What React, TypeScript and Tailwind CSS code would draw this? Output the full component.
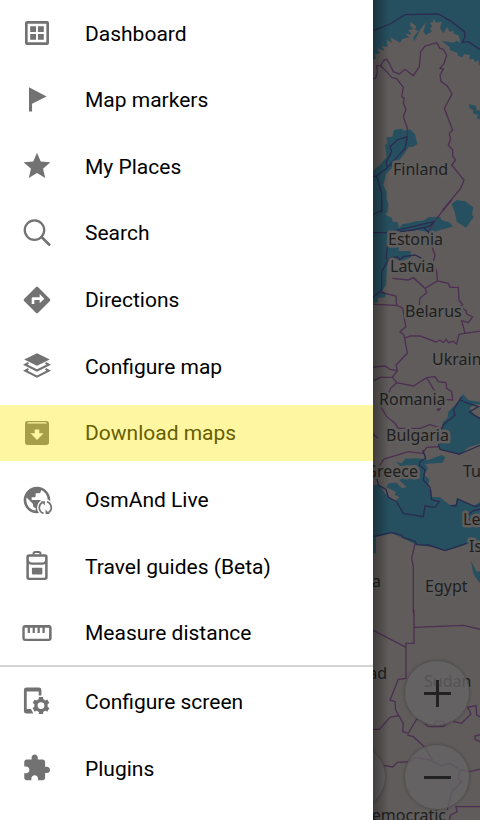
import React from "react";

type Item = { label: string; icon: React.ReactNode; active?: boolean };

const primary: Item[] = [
  {
    label: "Dashboard",
    icon: (
      <path
        fillRule="evenodd"
        d="M4.5 3h15A1.5 1.5 0 0 1 21 4.5v15a1.5 1.5 0 0 1-1.5 1.5h-15A1.5 1.5 0 0 1 3 19.5v-15A1.5 1.5 0 0 1 4.5 3zM5 5v14h14V5zM6.9 6.9h4.4v4.4H6.9zM12.7 6.9h4.4v4.4h-4.4zM6.9 12.7h4.4v4.4H6.9zM12.7 12.7h4.4v4.4h-4.4z"
      />
    ),
  },
  { label: "Map markers", icon: <path d="M6 2.5 19.2 9.3 8.3 14.8v5.9H6z" /> },
  {
    label: "My Places",
    icon: <path d="M12 17.27 18.18 21l-1.64-7.03L22 9.24l-7.19-.61L12 2 9.19 8.63 2 9.24l5.46 4.73L5.82 21z" />,
  },
  {
    label: "Search",
    icon: (
      <g fill="none" stroke="currentColor" strokeLinecap="round">
        <circle cx="10.1" cy="9.8" r="7.3" strokeWidth="1.7" />
        <path d="m15.4 15 5.9 5.8" strokeWidth="1.9" />
      </g>
    ),
  },
  {
    label: "Directions",
    icon: (
      <path d="M21.71 11.29l-9-9c-.39-.39-1.02-.39-1.41 0l-9 9c-.39.39-.39 1.02 0 1.41l9 9c.39.39 1.02.39 1.41 0l9-9c.39-.38.39-1.01 0-1.41zM14 14.5V12h-4v3H8v-4c0-.55.45-1 1-1h5V7.5l3.5 3.5-3.5 3.5z" />
    ),
  },
  {
    label: "Configure map",
    icon: (
      <g>
        <path d="m12 2.4 9.6 4.7-9.6 4.8-9.6-4.8z" />
        <path
          d="M5.6 9.6 3.2 11l8.8 4.4 8.8-4.4-2.4-1.4M5.6 14.2l-2.4 1.4L12 20l8.8-4.4-2.4-1.4"
          fill="none"
          stroke="currentColor"
          strokeWidth="1.6"
        />
      </g>
    ),
  },
  {
    label: "Download maps",
    active: true,
    icon: (
      <path
        fillRule="evenodd"
        d="M5 3h14a2 2 0 0 1 2 2v14a2 2 0 0 1-2 2H5a2 2 0 0 1-2-2V5a2 2 0 0 1 2-2zM5.2 4 4.600 4.800h14.800l-.600-.800zM10.300 9.300h3.400v2.900h3.200L12 17.300l-4.900-5.100h3.200z"
      />
    ),
  },
  {
    label: "OsmAnd Live",
    icon: (
      <g>
        <mask id="globe-cut">
          <rect width="24" height="24" fill="white" />
          <circle cx="18.2" cy="17.7" r="6.2" fill="black" />
        </mask>
        <path
          mask="url(#globe-cut)"
          d="M12 2C6.48 2 2 6.48 2 12s4.48 10 10 10 10-4.48 10-10S17.52 2 12 2zm-1 17.93c-3.95-.49-7-3.85-7-7.93 0-.62.08-1.21.21-1.79L9 15v1c0 1.1.9 2 2 2v1.93zm6.9-2.54c-.26-.81-1-1.39-1.9-1.39h-1v-3c0-.55-.45-1-1-1H8v-2h2c.55 0 1-.45 1-1V7h2c1.1 0 2-.9 2-2v-.41c2.93 1.19 5 4.06 5 7.41 0 2.08-.8 3.97-2.1 5.39z"
        />
        <g fill="none" stroke="currentColor" strokeWidth="1.3">
          <path d="M16.9 22A4.500 4.500 0 0 1 16 13.800M19.500 13.400A4.500 4.500 0 0 1 20.600 21.500" />
        </g>
        <path d="M14.900 12.900h3v3.300zM21.600 22.500h-3.200v-3.300z" />
      </g>
    ),
  },
  {
    label: "Travel guides (Beta)",
    icon: (
      <g>
        <path
          fillRule="evenodd"
          d="M6 3.2h12a2 2 0 0 1 2 2v15.300a2 2 0 0 1-2 2H6a2 2 0 0 1-2-2V5.200a2 2 0 0 1 2-2zM6.500 5a.6.6 0 0 0-.6.6v1.500a2.200 2.200 0 0 0 2.200 2.200h7.800a2.200 2.200 0 0 0 2.200-2.200V5.600a.6.6 0 0 0-.6-.6zM5.900 10.500v9.700a.6.6 0 0 0 .6.6h11a.6.6 0 0 0 .6-.6v-9.700q-1 .5-2.200.5H8.100q-1.200 0-2.200-.5z"
        />
        <path d="M9.400 3.500V2.800q0-1.300 1.300-1.300h2.600q1.300 0 1.300 1.300v.7" fill="none" stroke="currentColor" strokeWidth="1.500" />
        <rect x="8.200" y="13.300" width="7.800" height="5" rx=".6" />
      </g>
    ),
  },
  {
    label: "Measure distance",
    icon: (
      <path d="M21 6H3c-1.100 0-2 .9-2 2v8c0 1.100.9 2 2 2h18c1.100 0 2-.9 2-2V8c0-1.100-.9-2-2-2zm0 10.300H2.800V8H5v4h1.700V8h2v4h1.700V8h2v4h1.700V8h2v4h1.700V8h3.300z" />
    ),
  },
];

const secondary: Item[] = [
  {
    label: "Configure screen",
    icon: (
      <g>
        <path d="M4 1.900h9.500a1.800 1.800 0 0 1 1.800 1.800v4.200h-2V4.900H4.300V18h3.200l1.700 3.400H4a1.800 1.800 0 0 1-1.800-1.800V3.700A1.800 1.800 0 0 1 4 1.900z" />
        <circle cx="15" cy="15.400" r="3.800" fill="none" stroke="currentColor" strokeWidth="2.500" />
        <g stroke="currentColor" strokeWidth="3.200">
          <path d="M15 9v2.600M15 19.200v2.600M9.500 12.200l2.200 1.300M18.300 17.300l2.200 1.300M9.500 18.600l2.200-1.300M18.300 13.500l2.200-1.300" />
        </g>
      </g>
    ),
  },
  {
    label: "Plugins",
    icon: (
      <path
        transform="translate(.6 1) scale(.92)"
        d="M20.500 11H19V7c0-1.100-.9-2-2-2h-4V3.500C13 2.120 11.880 1 10.500 1S8 2.120 8 3.500V5H4c-1.100 0-1.990.9-1.990 2v3.800H3.500c1.490 0 2.700 1.210 2.700 2.700s-1.210 2.700-2.700 2.700H2V20c0 1.100.9 2 2 2h3.800v-1.500c0-1.490 1.210-2.700 2.700-2.700 1.490 0 2.700 1.210 2.700 2.700V22H17c1.100 0 2-.9 2-2v-4h1.500c1.380 0 2.500-1.120 2.500-2.500S21.880 11 20.500 11z"
      />
    ),
  },
];

function MenuRow({ label, icon, active }: Item) {
  return (
    <li>
      <button
        className={
          active
            ? "flex h-14 w-full items-center gap-8 bg-[#fff6a1] pl-[21px] text-[21px] leading-[34px] text-[#655f00]"
            : "flex h-14 w-full items-center gap-8 pl-[21px] text-[21px] leading-[34px] text-black"
        }
      >
        <svg
          viewBox="0 0 24 24"
          className={active ? "size-8 text-[#a69e49]" : "size-8 text-[#727272]"}
          fill="currentColor"
          aria-hidden="true"
        >
          {icon}
        </svg>
        <span className="pt-px">{label}</span>
      </button>
    </li>
  );
}

const places: { name: string; x: number; y: number; end?: boolean }[] = [
  { name: "Finland", x: 393, y: 175 },
  { name: "Estonia", x: 388, y: 245 },
  { name: "Latvia", x: 390, y: 272 },
  { name: "Belarus", x: 405, y: 317 },
  { name: "Ukraine", x: 432, y: 365 },
  { name: "Romania", x: 379, y: 405 },
  { name: "Bulgaria", x: 386, y: 441 },
  { name: "Greece", x: 418, y: 477, end: true },
  { name: "Turkey", x: 463, y: 477 },
  { name: "Lebanon", x: 463, y: 525 },
  { name: "Israel", x: 469, y: 552 },
  { name: "Libya", x: 381, y: 587, end: true },
  { name: "Egypt", x: 425, y: 592 },
  { name: "Chad", x: 387, y: 679, end: true },
  { name: "Sudan", x: 424, y: 687 },
  { name: "Democratic", x: 446, y: 821, end: true },
];

function MapDrawing() {
  return (
    <svg
      viewBox="373 0 107 820"
      preserveAspectRatio="xMinYMin slice"
      className="absolute inset-0 size-full"
      aria-label="Map"
    >
      <g transform="translate(360 0) scale(.33333)">
        <g fill="#26505f">
          <path d="M30 0H370V200L358 195 355 180 345 187 340 176 328 178 330 165 312 162 308 172 295 168 292 158 270 150 268 140 245 122 280 128 290 122 302 130 295 105 280 102 282 92 268 95 262 80 250 100 240 85 245 65 228 68 222 56 217 68 208 67 218 80 210 84 215 95 197 105 190 95 199 65 180 90 163 124 160 112 176 92 165 90 168 78 152 66 150 76 160 88 145 90 155 104 133 100 148 112 128 116 120 128 92 112 96 128 80 120 84 140 64 138 74 152 50 145 60 160 44 162 48 175 30 185z" />
          <path d="M75 435 82 430 80 412 97 410 102 390 125 386 132 392 150 388 165 402 172 432 160 440 145 442 135 458 110 490 95 505 78 522 70 555 80 575 80 600 86 612 82 640H30V520L60 495 80 470z" />
          <path d="M328 312 348 318 350 332 370 330V362L350 355 354 345 338 340 340 330 328 325z" />
          <g transform="translate(0 600)">
            <path d="M275 12 290 0 315 4 340 22 336 45 342 50 318 83 290 65 285 38z" />
            <path d="M30 0H82L76 22 78 45 96 54 98 65 112 66 118 84 128 72 152 68 165 64 190 62 205 52 240 50 245 60 270 68 278 80 240 90 215 100 200 95 170 90 120 97 85 96 78 142H116V153H152V172L130 182 110 178 85 172 80 210 78 255 62 278 76 280 76 292 52 294 55 306 30 312z" />
          </g>
          <g transform="translate(0 1200)">
            <path d="M265 35 300 0 308-18 325 0 370 8V128L325 142 300 165 240 148 238 130 268 124 268 98 245 92 248 65 262 55z" />
            <path d="M30 255H58L75 280 90 292 105 305 118 292 104 284 108 276 80 262 85 250 110 248 125 264 140 262 118 240 128 234 180 235 170 195 120 198 108 186 125 190 135 176 175 175 205 180 245 165 256 172 248 188 195 192 204 205 192 225 208 238 204 262 215 272 215 290 240 292 270 316 288 312 290 296 340 318 370 300V430L320 432 300 440 255 453 225 442 170 435 130 415 95 400 48 412V460H30z" />
            <path d="M333 483 350 515 370 512V565L340 522z" />
          </g>
        </g>
        <path d="M328 24 345 12 370 15V50L350 52z" transform="translate(0 1200)" fill="#605c5b" />

        <g fill="none" stroke="#4c2f52" strokeWidth="4">
          <path d="M30 240 47 235 52 215 50 197H62L80 215 95 232 110 236 130 262 125 290 133 295 130 310 138 328 130 350 142 385V410M62 197 72 180 80 178 88 190 100 215 118 222 135 208 160 227 178 200 182 155 195 138 230 128 240 145 250 148 260 165 252 190 240 205 250 207 240 225 243 245 262 258 276 282 253 325 278 390 268 400 272 418 265 435 278 450 278 468 287 480 275 495 312 540 302 565 248 630" />
          <g transform="translate(0 600)">
            <path d="M275 0 222 65 205 95 212 130 225 165 220 185 230 215 232 243 265 250 270 262 295 262 297 300 308 314 300 320 318 332 320 342 338 350 325 368 305 362 315 400 297 403 290 432 280 424 265 428 258 418 250 428 240 420 228 426 180 408 150 408 135 414M315 400 370 392M232 243 195 265 160 233 145 240 97 235M195 265 200 278 180 295 178 315M30 313 110 316 128 324 137 380 120 395 132 405 142 460 108 495 112 512 97 532 110 548 160 558 200 533 225 530 235 545 258 548 260 565 275 575 278 600 255 598M200 533 222 570 242 610M30 502 75 498 90 508 112 512M30 548 60 532 97 532M62 277 108 288 110 316M110 548 92 565 78 600" />
          </g>
          <g transform="translate(0 1200)">
            <path d="M62 20 80 50 105 70 115 85 180 85 210 74 245 85M58 198 72 177 145 155 188 160 200 142 240 140M30 95 55 115M232 28 240 26 236 32zM165 430 155 475 160 500V640" />
          </g>
          <g transform="translate(0 1830)">
            <path d="M162 0V100H138V205L115 208 90 270 105 275 107 300 130 340 128 365 145 370 170 327 185 332 205 350 248 350 275 333 305 340 333 312 323 292 348 287 350 315 370 325M162 52 310 46 370 60M30 56 138 112M30 358H58L90 322 115 317M142 375 160 380 195 412 220 455 245 468 270 460 300 480 295 505 305 515 275 545 262 600M300 480 330 485 370 475M70 466 98 471 112 457 150 455 165 443 215 450M370 372 345 378V388L370 400M370 590H288L292 605 272 615 268 630M225 334H252V348H225z" />
          </g>
        </g>
        <g fill="none" stroke="#2b2b50" strokeWidth="4">
          <path d="M30 96 90 72 135 44 235 42 275 65 313 95 315 110 307 127 325 125 370 155M142 410 115 418 90 440 95 455 78 488 82 500 95 495M142 410 135 445 80 505 50 528 30 534M50 528 65 580V640" />
          <g transform="translate(0 600)">
            <path d="M65 0V30L30 50M30 98H80L222 65 210 78 160 90 120 95M192 84 210 100M85 96 82 140 78 178M85 178 65 215V270L30 300M85 175 112 170 120 180 130 170 165 165 185 175M65 275 75 280" />
          </g>
          <g transform="translate(0 1200)">
            <path d="M305-10 280 30 285 45 250 75 240 100M235 130 240 148 298 162 370 132M300 0 320 8 355 20 328 36 370 62M188 150 197 175 180 185 178 195 195 210 190 240 210 262 215 300 238 305 225 322 195 318 190 350 130 340 110 305 85 292 78 268 55 255 50 232M30 412 95 397 125 406 128 412 165 424 170 434 205 435 255 452 320 430M270 317 288 318 293 297 345 320 370 312M325 345Q340 325 370 328" />
          </g>
        </g>
      </g>
      <g
        className="font-['Noto_Sans','Open_Sans',sans-serif] text-[16px]"
        fill="#20201f"
        stroke="#605e5d"
        strokeWidth="5"
        strokeLinejoin="round"
        paintOrder="stroke"
      >
        {places.map((p) => (
          <text key={p.name} x={p.x} y={p.y} textAnchor={p.end ? "end" : "start"}>
            {p.name}
          </text>
        ))}
      </g>
    </svg>
  );
}

const round =
  "absolute flex size-[66px] items-center justify-center rounded-full border border-[#535150] bg-[#666465]/75 shadow-[0_0_3px_rgba(0,0,0,0.2)]";

export default function App() {
  return (
    <main className="flex min-h-screen bg-white font-['Roboto',sans-serif]">
      <nav className="w-[373px] shrink-0" aria-label="Main menu">
        <ul className="flex h-[665px] flex-col justify-between pt-[5px] pb-1">
          {primary.map((item) => (
            <MenuRow key={item.label} {...item} />
          ))}
        </ul>
        <ul className="flex flex-col gap-[11px] border-t-2 border-[#d4d4d4] pt-[6px]">
          {secondary.map((item) => (
            <MenuRow key={item.label} {...item} />
          ))}
        </ul>
      </nav>
      <section className="relative flex-1 overflow-hidden bg-[#605c5b]">
        <MapDrawing />
        <button aria-label="My location" className={`${round} bottom-[10px] -left-[53px]`} />
        <button aria-label="Zoom in" className={`${round} right-[10px] bottom-[94px]`}>
          <svg viewBox="0 0 27 27" className="size-[27px]" stroke="#222222" strokeWidth="3" aria-hidden="true">
            <path d="M0 13.5H27M13.5 0V27" />
          </svg>
        </button>
        <button aria-label="Zoom out" className={`${round} right-[10px] bottom-[10px]`}>
          <svg viewBox="0 0 27 27" className="size-[27px]" stroke="#222222" strokeWidth="3" aria-hidden="true">
            <path d="M0 13.5H27" />
          </svg>
        </button>
        <div className="pointer-events-none absolute inset-y-0 left-0 w-4 bg-linear-to-r from-black/35 to-transparent" />
      </section>
    </main>
  );
}
